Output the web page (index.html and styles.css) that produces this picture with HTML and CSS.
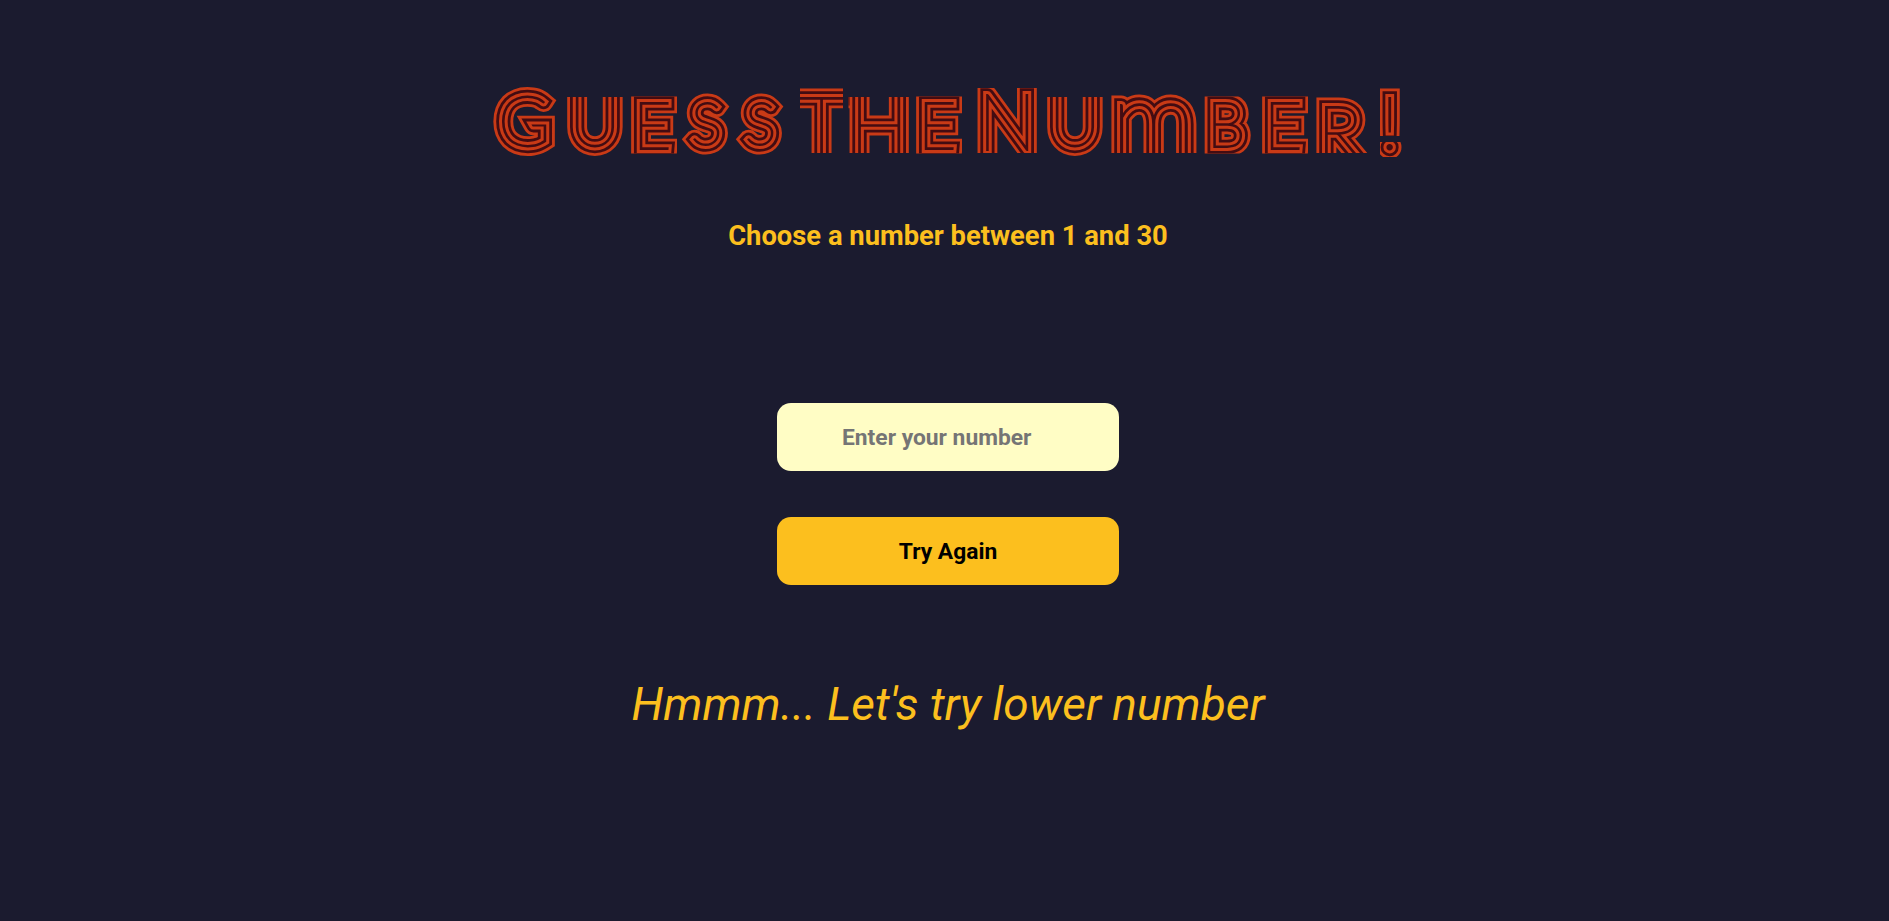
FILE: index.html
```html
<!DOCTYPE html>
<html lang="en">
<head>
<meta charset="utf-8">
<title>Guess The Number!</title>
<link rel="stylesheet" href="styles.css">
</head>
<body>
<main class="game">
  <h1 class="title">
    <svg class="title-art" viewBox="488 78 920 84" role="img" aria-label="Guess The Number!">
      <defs>
        <clipPath id="letters">
          <path d="M488 80h74v80h-74zM565 97h60v61h-60zM629 96.500h48v57h-48zM679 92h55v66h-55zM734 92h56v66h-56zM800 87h43v66h-43zM848.500 97h61v56h-61zM914 96.500h48v57h-48zM976 88h65v65h-65zM1045 97h60v61h-60zM1108 92h91v61h-91zM1203 96.500h54v57h-54zM1260 96.500h48v57h-48zM1313 96.500h64v56.500h-64zM1380 88h22v48h-22zM1380 142h22v15h-22z"/>
        </clipPath>
      </defs>
      <g clip-path="url(#letters)">
        <g class="ring ring-1"><text id="title-text" class="title-text"><tspan x="498" y="146" font-size="71">G</tspan><tspan x="569" y="146" font-size="72">U</tspan><tspan x="633" y="149" font-size="66">E</tspan><tspan x="691" y="145" font-size="59">S</tspan><tspan x="745" y="145" font-size="59">S</tspan> <tspan x="799" y="152.500" font-size="79">T</tspan><tspan x="850" y="153" font-size="78">H</tspan><tspan x="918" y="149" font-size="66">E</tspan> <tspan x="978" y="150" font-size="78">N</tspan><tspan x="1049" y="146" font-size="72">U</tspan><tspan x="1111" y="158" font-size="108">m</tspan><tspan x="1207" y="147" font-size="62">B</tspan><tspan x="1264" y="149" font-size="66">E</tspan><tspan x="1317" y="160" font-size="77">R</tspan><tspan x="1381" y="149" font-size="72">!</tspan></text></g>
        <use class="ring ring-2" href="#title-text"/>
        <use class="ring ring-3" href="#title-text"/>
        <use class="ring ring-4" href="#title-text"/>
      </g>
    </svg>
  </h1>
  <h2 class="hint">Choose a number between 1 and 30</h2>
  <form class="controls">
    <input class="field" type="text" placeholder="Enter your number">
    <button class="retry" type="button">Try Again</button>
  </form>
  <p class="message">Hmmm... Let's try lower number</p>
</main>
</body>
</html>
```
FILE: styles.css
```css
* {
  box-sizing: border-box;
}

body {
  margin: 0;
  min-height: 100vh;
  background: #1b1b2f;
  color: #fcbf1e;
  font-family: Roboto, sans-serif;
}

.game {
  display: flex;
  flex-direction: column;
  align-items: center;
  padding: 78px 0 0 7px;
}

.title {
  margin: 0;
  height: 84px;
}

.title-art {
  display: block;
  width: 920px;
  height: 84px;
}

.title-text {
  font-family: Lato, sans-serif;
  font-weight: 100;
}

.ring {
  stroke-linejoin: miter;
  stroke-miterlimit: 3;
}

.ring-1 {
  fill: #c93a16;
  stroke: #c93a16;
  stroke-width: 19px;
}

.ring-2 {
  fill: #430c12;
  stroke: #430c12;
  stroke-width: 13.4px;
}

.ring-3 {
  fill: #c93a16;
  stroke: #c93a16;
  stroke-width: 7.8px;
}

.ring-4 {
  fill: #430c12;
  stroke: #430c12;
  stroke-width: 1.8px;
}

.hint {
  margin: 58px 0 0;
  font-size: 27.35px;
  line-height: 32px;
  font-weight: 700;
}

.controls {
  display: flex;
  flex-direction: column;
  gap: 46px;
  width: 342px;
  margin-top: 151px;
}

.field,
.retry {
  width: 100%;
  height: 68px;
  border: 0;
  border-radius: 14px;
  font: 700 22.8px Roboto, sans-serif;
}

.field {
  padding: 1px 65px 0;
  background: #fffdc5;
  color: #000;
}

.field::placeholder {
  color: #757575;
}

.retry {
  background: #fcbf1e;
  color: #000;
}

.message {
  margin: 91px 0 0;
  font-size: 46px;
  line-height: 56px;
  font-style: italic;
}
```
